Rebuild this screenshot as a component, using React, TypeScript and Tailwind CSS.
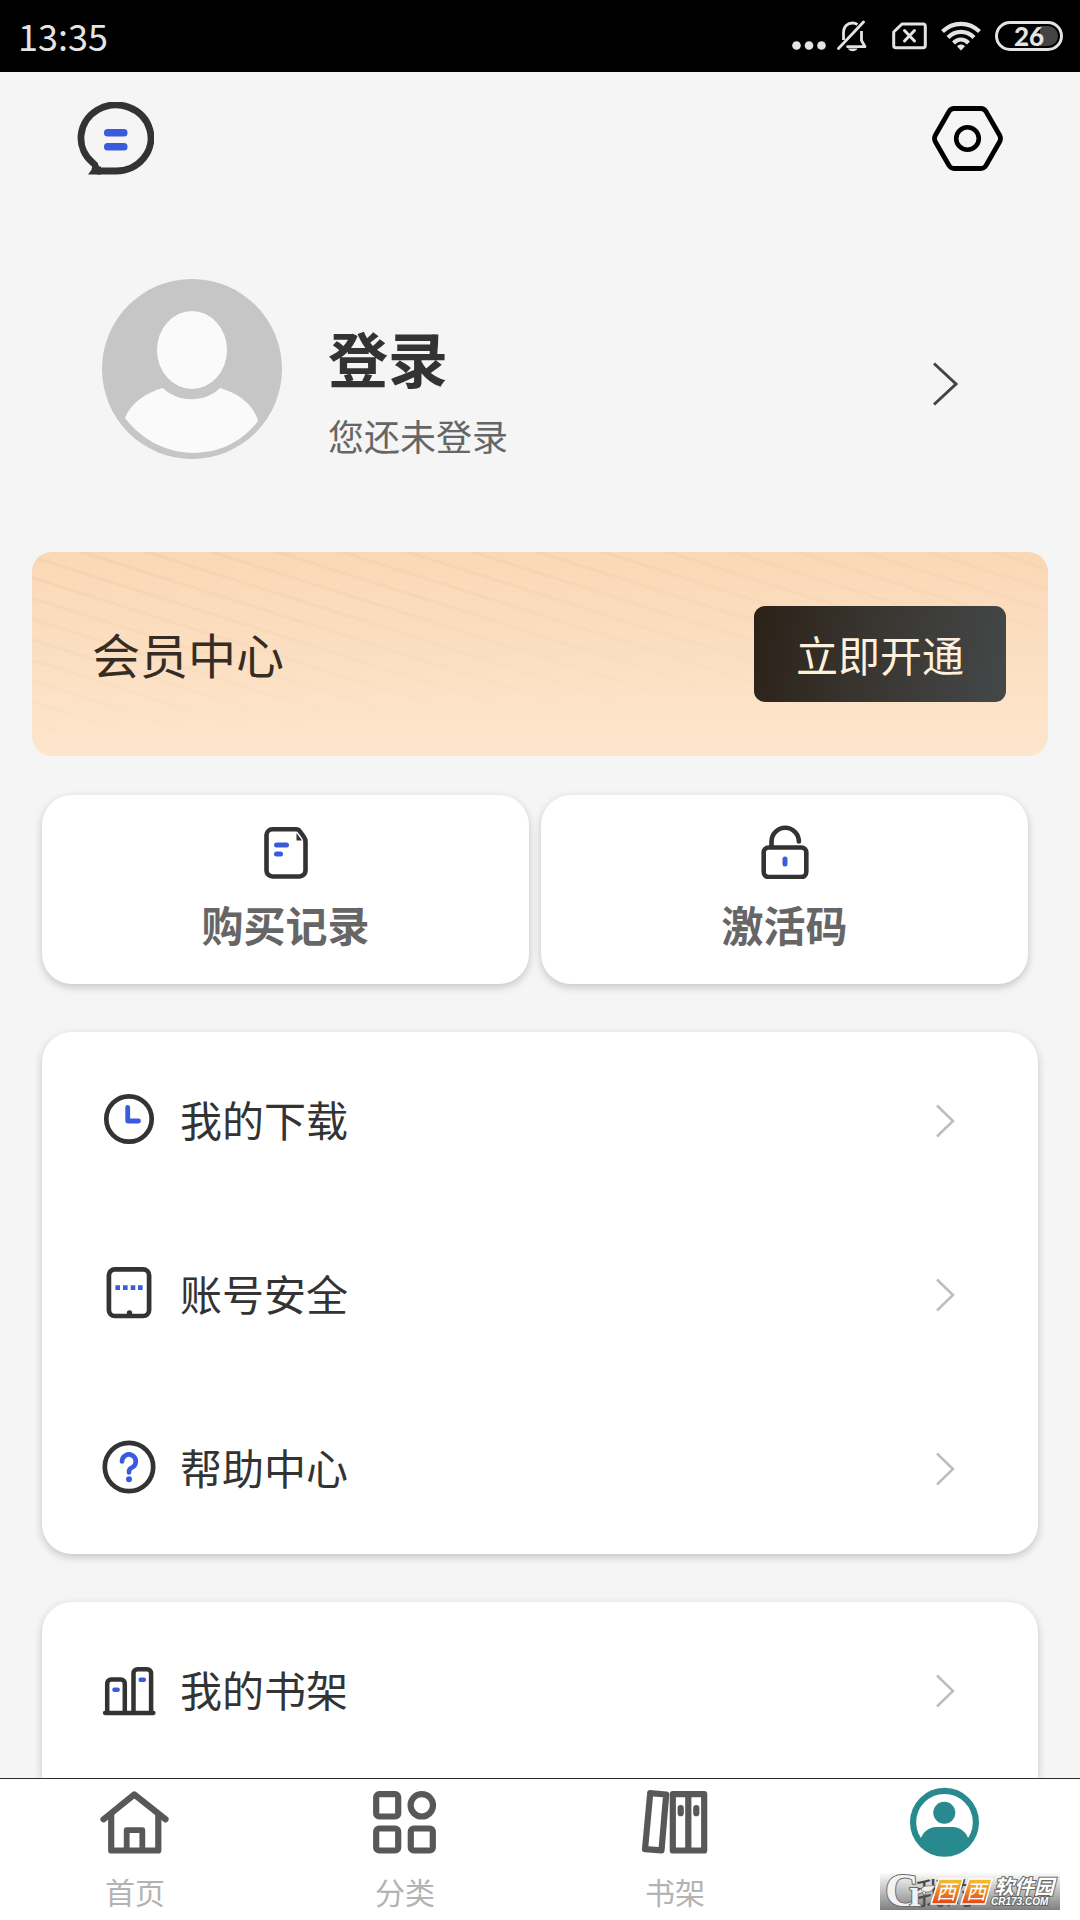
import React from "react";

const INK = "#333333";
const BLUE = "#3a5bdc";
const NAV = "#585858";
const STATUS = "#e4e4e4";

function StatusBar() {
  return (
    <div className="flex h-[72px] shrink-0 items-center justify-between bg-black pl-[18px] pr-[17px] text-[#e4e4e4]">
      <span className="pb-[2px] text-[36px] leading-none">13:35</span>
      <div className="flex items-center gap-[14px]">
        <div className="flex items-center gap-[11px] pr-[11px]">
          <svg width="34" height="32" viewBox="0 0 34 32" fill={STATUS}>
            <circle cx="4.5" cy="25.5" r="4.3" />
            <circle cx="17" cy="25.5" r="4.3" />
            <circle cx="29.5" cy="25.5" r="4.3" />
          </svg>
          <svg width="30" height="32" viewBox="0 0 30 32" fill="none" stroke={STATUS} strokeWidth="2.8">
            <path d="M1.5 28.5 26.5 2" strokeLinecap="round" />
            <path d="M6.5 20V12.5C6.5 6.500 10.500 3 15.500 3c2 0 3.500.5 5 1.500" />
            <path d="M24.500 11V20.500L28 26.700H9.500" strokeLinejoin="round" />
            <path d="M11 28.500h9.500c-1.500 3.600-8 3.600-9.500 0Z" fill={STATUS} stroke="none" />
          </svg>
        </div>
        <svg width="35" height="32" viewBox="0 0 35 32" fill="none" stroke={STATUS} strokeWidth="3">
          <path d="M10 4H31a2.300 2.300 0 0 1 2.300 2.300V25.400A2.300 2.300 0 0 1 31 27.700H4a2.300 2.300 0 0 1-2.300-2.300V12Z" strokeLinejoin="round" />
          <path d="M12.500 10.500 22.500 21M22.500 10.500 12.500 21" strokeLinecap="round" />
        </svg>
        <svg width="40" height="32" viewBox="0 0 40 32" fill="none" stroke={STATUS} strokeWidth="4.200">
          <path d="M1.500 11.500C12 1.200 28 1.200 38.500 11.500" />
          <path d="M7 17.500c7.500-7.500 18.500-7.500 26 0" />
          <path d="M12.500 23c4.500-4.500 10.500-4.500 15 0" />
          <path d="M20 24.500c2.300 0 3.800 1 3.800 2L20 30.500 16.200 26.500c0-1 1.500-2 3.800-2Z" fill={STATUS} stroke="none" />
        </svg>
        <div className="flex h-[30px] w-[68px] items-center justify-center rounded-full border-[3px] border-[#e4e4e4] bg-[linear-gradient(90deg,#000_68%,#444_68%)] bg-clip-content p-[2px]">
          <span className="font-['Lato','Noto_Sans_CJK_SC',sans-serif] text-[26px] font-black leading-none">26</span>
        </div>
      </div>
    </div>
  );
}

function MessageIcon() {
  return (
    <svg width="77" height="73" viewBox="0 0 77 73" fill="none">
      <path d="M20 69H38.500A35 33 0 1 0 15.500 60.500C19 63 19.500 66 17 69" stroke={INK} strokeWidth="6.800" />
      <path d="M11 72.400 17 64.500H24V72.400Z" fill={INK} />
      <rect x="27" y="27" width="23.500" height="7.500" rx="3.500" fill={BLUE} />
      <rect x="27" y="41" width="23.500" height="7.500" rx="3.500" fill={BLUE} />
    </svg>
  );
}

function SettingsIcon() {
  return (
    <svg width="71" height="65" viewBox="0 0 71 65" fill="none" stroke="#000">
      <path
        d="M22 2.500H49Q52 2.500 54 5.500L67.500 29Q69.500 32.500 67.500 36L54 59.500Q52 62.500 49 62.500H22Q19 62.500 17 59.500L3.500 36Q1.500 32.500 3.500 29L17 5.500Q19 2.500 22 2.500Z"
        strokeWidth="4.800"
      />
      <circle cx="35.500" cy="32.500" r="11.300" strokeWidth="4.600" />
    </svg>
  );
}

function Avatar() {
  return (
    <svg width="180" height="180" viewBox="0 0 180 180" className="shrink-0">
      <circle cx="90" cy="90" r="90" fill="#c6c6c6" />
      <ellipse cx="90" cy="71" rx="35" ry="39" fill="#fafafa" />
      <path d="M23 139C29 124 43 114 61 109C76 124 103 124 118 109C136 114 152 126 156 142C124 185 58 185 23 139Z" fill="#fafafa" />
    </svg>
  );
}

function LargeChevron() {
  return (
    <svg width="26" height="44" viewBox="0 0 26 44" fill="none" stroke="#444" strokeWidth="3">
      <path d="M1 1.500 23 22 1 42.500" />
    </svg>
  );
}

function SmallChevron() {
  return (
    <svg width="20" height="34" viewBox="0 0 20 34" fill="none" stroke="#bdbdbd" strokeWidth="2.500" className="mt-1">
      <path d="M1 1.500 17 17 1 32.500" />
    </svg>
  );
}

function RecordIcon() {
  return (
    <svg width="44" height="54" viewBox="0 0 44 54" fill="none">
      <path d="M8.500 4.300H32Q34.500 4.300 36 6.500L40 12Q41.500 14 41.500 17V45.500a6 6 0 0 1-6 6h-27a6 6 0 0 1-6-6V10.300a6 6 0 0 1 6-6Z" stroke={INK} strokeWidth="4.600" strokeLinejoin="round" />
      <path d="M32.500 8 38 15.500H32.500Z" fill={INK} />
      <rect x="10" y="17.500" width="15" height="5" rx="2.500" fill={BLUE} />
      <rect x="10" y="26.500" width="9" height="5" rx="2.500" fill={BLUE} />
    </svg>
  );
}

function UnlockIcon() {
  return (
    <svg width="48" height="54" viewBox="0 0 48 54" fill="none">
      <rect x="2.700" y="22.500" width="42.600" height="29.500" rx="5" stroke={INK} strokeWidth="4.600" />
      <path d="M10.500 21V16.500a13.700 13.700 0 0 1 27.400 0" stroke={INK} strokeWidth="4.600" strokeLinecap="round" />
      <rect x="21.500" y="31.500" width="5" height="10" rx="2.500" fill={BLUE} />
    </svg>
  );
}

function ClockIcon() {
  return (
    <svg width="54" height="54" viewBox="0 0 54 54" fill="none">
      <circle cx="27" cy="27" r="22.700" stroke={INK} strokeWidth="4.700" />
      <path d="M25.700 15.500V29H36.500" stroke={BLUE} strokeWidth="4.800" strokeLinecap="round" strokeLinejoin="round" />
    </svg>
  );
}

function AccountIcon() {
  return (
    <svg width="54" height="54" viewBox="0 0 54 54" fill="none">
      <rect x="6.900" y="3.300" width="40.200" height="46.700" rx="6" stroke={INK} strokeWidth="4.700" />
      <circle cx="27.500" cy="47" r="2.700" fill={INK} />
      <path d="M13.400 21.700h4.600M21 21.700h4.600M28.700 21.700h4.600M36 21.700h4.600" stroke={BLUE} strokeWidth="4.800" />
    </svg>
  );
}

function HelpIcon() {
  return (
    <svg width="54" height="54" viewBox="0 0 54 54" fill="none">
      <circle cx="27" cy="27" r="24.200" stroke={INK} strokeWidth="4.700" />
      <path d="M20 21.500a6.900 6.900 0 1 1 10.500 5.800C28 28.500 27 29 27 32.500" stroke={BLUE} strokeWidth="4.600" strokeLinecap="round" />
      <circle cx="27" cy="39.200" r="3" fill={BLUE} />
    </svg>
  );
}

function ShelfIcon() {
  return (
    <svg width="54" height="54" viewBox="0 0 54 54" fill="none">
      <path d="M3 51H51.500" stroke={INK} strokeWidth="4.300" strokeLinecap="round" />
      <path d="M5.200 51V21.500a4 4 0 0 1 4-4h9.600a4 4 0 0 1 4 4V51M31.500 51V11.200a4 4 0 0 1 4-4h9.600a4 4 0 0 1 4 4V51" stroke={INK} strokeWidth="4.500" />
      <rect x="10.300" y="25.500" width="7.500" height="4.500" rx="2" fill={BLUE} />
      <rect x="36.500" y="15.500" width="7.500" height="4.500" rx="2" fill={BLUE} />
    </svg>
  );
}

function HomeIcon() {
  return (
    <svg width="72" height="72" viewBox="0 0 72 72" fill="none" stroke={NAV} strokeWidth="6.200" strokeLinecap="round" strokeLinejoin="round">
      <path d="M4.500 32.300 35.300 7.500 66.500 32.300" />
      <path d="M12.200 27.500V63.500H59.300V27.500" />
      <path d="M27.700 62.500V43.200H43.300V62.500" strokeWidth="5.800" />
    </svg>
  );
}

function CategoryIcon() {
  return (
    <svg width="72" height="72" viewBox="0 0 72 72" fill="none" stroke={NAV} strokeWidth="6.200">
      <rect x="7.200" y="7.200" width="22" height="22.300" rx="3" />
      <circle cx="52.800" cy="18.300" r="11.200" />
      <rect x="7.200" y="41.500" width="22" height="22" rx="3" />
      <rect x="41.800" y="41.500" width="22" height="22" rx="3" />
    </svg>
  );
}

function BooksIcon() {
  return (
    <svg width="72" height="72" viewBox="0 0 72 72" fill="none" stroke={NAV} strokeWidth="6.200" strokeLinejoin="round">
      <path d="M11.200 6.200 27.200 7.500 22.500 63.300 6 62.200Z" />
      <path d="M33.800 7.200H65.200V63.500H33.800ZM49.300 7.200V63.500" />
      <path d="M41.700 21.200v5M57.300 21.200v5" strokeLinecap="round" />
    </svg>
  );
}

function ProfileIcon() {
  return (
    <svg width="72" height="72" viewBox="0 0 72 72" fill="#288a8e">
      <circle cx="35.500" cy="35.300" r="31.400" fill="none" stroke="#288a8e" strokeWidth="6.200" />
      <circle cx="35.300" cy="25.700" r="11" />
      <path d="M11 53C14 45 20 40 27 40H44C51 40 57 45 60 53A31 31 0 0 1 11 53Z" />
    </svg>
  );
}

function MemberStripes() {
  return (
    <svg className="absolute inset-0 h-full w-full" aria-hidden="true">
      <defs>
        <pattern id="stripes" width="100" height="19.700" patternUnits="userSpaceOnUse" patternTransform="translate(0 24) rotate(17.600)">
          <rect width="100" height="3" fill="#eec89f" />
        </pattern>
        <linearGradient id="fade" x1="0" y1="0" x2="0.350" y2="1">
          <stop offset="0" stopColor="#fff" stopOpacity="0.350" />
          <stop offset="0.850" stopColor="#fff" stopOpacity="0" />
        </linearGradient>
        <mask id="stripeMask">
          <rect width="100%" height="100%" fill="url(#fade)" />
        </mask>
      </defs>
      <rect width="100%" height="100%" fill="url(#stripes)" mask="url(#stripeMask)" />
    </svg>
  );
}

function ActionCard({ icon, label }: { icon: React.ReactNode; label: string }) {
  return (
    <button
      type="button"
      className="flex flex-col items-center rounded-[30px] bg-white pb-[30px] pt-[30px] shadow-[0_3px_8px_rgba(0,0,0,0.2)]"
    >
      {icon}
      <span className="mt-[15px] text-[42px] font-bold leading-[60px] text-[#666]">{label}</span>
    </button>
  );
}

function ListRow({ icon, label }: { icon: React.ReactNode; label: string }) {
  return (
    <li>
      <button type="button" className="flex h-[174px] w-full items-center pl-[60px] pr-[82px] text-left">
        {icon}
        <span className="ml-6 flex-1 text-[42px] leading-[60px] text-[#333]">{label}</span>
        <SmallChevron />
      </button>
    </li>
  );
}

function NavItem({ icon, label, active = false }: { icon: React.ReactNode; label: string; active?: boolean }) {
  return (
    <a href="#" aria-current={active ? "page" : undefined} className="flex flex-col items-center pt-2">
      {icon}
      <span className={active ? "mt-[10px] text-[30px] leading-[44px] text-[#444]" : "mt-[10px] text-[30px] leading-[44px] text-[#b3b3b3]"}>{label}</span>
    </a>
  );
}

function SiteBadge() {
  return (
    <div className="absolute bottom-[10px] right-5">
      <svg width="180" height="38" viewBox="0 0 180 38" className="block overflow-visible" role="img" aria-label="Cr 西西软件园 CR173.COM">
        <defs>
          <linearGradient id="badgeBg" x1="0" y1="0" x2="0" y2="1">
            <stop offset="0" stopColor="#555" stopOpacity="0" />
            <stop offset="1" stopColor="#555" stopOpacity="0.750" />
          </linearGradient>
          <linearGradient id="badgeOrange" x1="0" y1="0" x2="0" y2="1">
            <stop offset="0.150" stopColor="#f5b52c" />
            <stop offset="0.900" stopColor="#e2501c" />
          </linearGradient>
        </defs>
        <rect width="180" height="38" fill="url(#badgeBg)" />
        <g fill="#f2f2f2" stroke="#6b6b6b" strokeWidth="2" paintOrder="stroke" fontFamily="Liberation Serif, serif" fontWeight="700">
          <text x="5" y="34" fontSize="47">C</text>
          <text x="29" y="34" fontSize="38">r</text>
        </g>
        <path d="M41 18C43 12 49 15 55 13C53 20 47 22 41 18Z" fill="#f2f2f2" stroke="#777" strokeWidth="0.800" />
        <path d="M59 7H83L76 32H51ZM89 7H112L105 32H81Z" fill="url(#badgeOrange)" stroke="#fff" strokeWidth="1.500" />
        <g fill="#fff" fontSize="20" fontFamily="Noto Sans CJK SC, sans-serif" fontStyle="italic" fontWeight="400">
          <text x="56" y="27">西</text>
          <text x="86" y="27">西</text>
        </g>
        <g fill="#fff" stroke="#666" strokeWidth="2" paintOrder="stroke" fontStyle="italic" fontWeight="700">
          <text x="114" y="22" fontSize="20" fontFamily="Noto Sans CJK SC, sans-serif">软件园</text>
          <text x="111" y="33" fontSize="10" fontFamily="Liberation Sans, sans-serif">CR173.COM</text>
        </g>
      </svg>
    </div>
  );
}

export default function App() {
  return (
    <div className="flex h-screen flex-col overflow-hidden bg-[#f5f5f5] font-['Noto_Sans_CJK_SC',sans-serif]">
      <StatusBar />

      <main className="flex min-h-0 flex-1 flex-col overflow-hidden">
        <header className="flex shrink-0 items-center justify-between px-[77px] pt-[30px]">
          <button type="button" aria-label="消息">
            <MessageIcon />
          </button>
          <button type="button" aria-label="设置">
            <SettingsIcon />
          </button>
        </header>

        <button type="button" className="mt-[104px] flex h-[184px] shrink-0 items-start pl-[102px] pr-[121px] text-left">
          <Avatar />
          <span className="ml-[46px] flex flex-1 flex-col pt-10">
            <span className="text-[60px] font-bold leading-[76px] text-[#333]">登录</span>
            <span className="mt-4 text-[36px] leading-[48px] text-[#666]">您还未登录</span>
          </span>
          <span className="self-center pt-[26px]">
            <LargeChevron />
          </span>
        </button>

        <section className="relative mx-8 mt-[89px] flex h-[204px] shrink-0 items-center justify-between overflow-hidden rounded-[20px] bg-linear-to-b from-[#fad8b6] to-[#fde6cd] pl-[60px] pr-[42px]">
          <MemberStripes />
          <h2 className="relative pb-[2px] text-[48px] leading-[72px] text-[#352c24]">会员中心</h2>
          <button
            type="button"
            className="relative h-24 w-[252px] rounded-[11px] bg-[linear-gradient(100deg,#2b2118_0%,#3a3732_50%,#44484a_100%)] text-[42px] leading-[60px] text-[#fdf0dc]"
          >
            立即开通
          </button>
        </section>

        <div className="ml-[42px] mr-[52px] mt-[39px] grid shrink-0 grid-cols-2 gap-3">
          <ActionCard icon={<RecordIcon />} label="购买记录" />
          <ActionCard icon={<UnlockIcon />} label="激活码" />
        </div>

        <ul className="mx-[42px] mt-12 shrink-0 rounded-[30px] bg-white shadow-[0_3px_8px_rgba(0,0,0,0.2)]">
          <ListRow icon={<ClockIcon />} label="我的下载" />
          <ListRow icon={<AccountIcon />} label="账号安全" />
          <ListRow icon={<HelpIcon />} label="帮助中心" />
        </ul>

        <ul className="mx-[42px] mt-12 flex-1 rounded-t-[30px] bg-white shadow-[0_3px_8px_rgba(0,0,0,0.2)]">
          <ListRow icon={<ShelfIcon />} label="我的书架" />
        </ul>
      </main>

      <nav className="relative grid h-[142px] shrink-0 grid-cols-4 border-t border-[#2a2a2a] bg-white">
        <NavItem icon={<HomeIcon />} label="首页" />
        <NavItem icon={<CategoryIcon />} label="分类" />
        <NavItem icon={<BooksIcon />} label="书架" />
        <NavItem icon={<ProfileIcon />} label="我的" active />
        <SiteBadge />
      </nav>
    </div>
  );
}
